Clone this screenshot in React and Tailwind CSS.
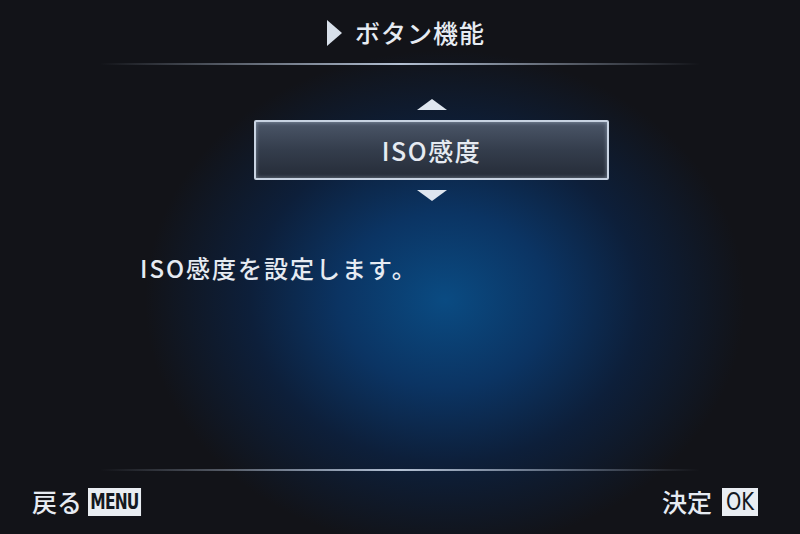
const jp = "font-['Noto_Sans_CJK_JP','Noto_Sans',sans-serif]";

function Arrow({ down }) {
  return (
    <svg width="30" height="11" viewBox="0 0 30 11" className="block">
      {down ? (
        <polygon points="0,0 30,0 15,11" fill="#dfe6ef" />
      ) : (
        <polygon points="15,0 30,11 0,11" fill="#dfe6ef" />
      )}
    </svg>
  );
}

function Divider() {
  return (
    <div className="mx-[100px] h-[2px] bg-gradient-to-r from-transparent via-[#b3c0d3] to-transparent" />
  );
}

export default function App() {
  return (
    <div
      className={`w-[800px] h-[534px] flex flex-col overflow-hidden text-[#e6ebf2] ${jp} bg-[radial-gradient(ellipse_300px_250px_at_445px_300px,#0a4b82_0%,#0b3463_35%,#0d1f3a_65%,#121318_100%)]`}
    >
      {/* title */}
      <div className="h-[63px] flex items-center justify-center gap-[13px] pl-[12px] pt-[16px] pb-[14px]">
        <svg width="15" height="26" viewBox="0 0 15 26">
          <polygon points="0,0 15,13 0,26" fill="#d8e0ea" />
        </svg>
        <span className="text-[25px] leading-none font-medium tracking-[1px]">ボタン機能</span>
      </div>
      <Divider />

      {/* selector */}
      <div className="ml-[254px] w-[355px] flex flex-col items-center mt-[34px]">
        <Arrow />
        <div className="mt-[10px] w-[355px] h-[60px] border-2 border-[#c8d3e2] rounded-[2px] flex items-center justify-center bg-gradient-to-b from-[#4b5668] via-[#343d4c] to-[#252c38] shadow-[inset_0_0_4px_rgba(200,215,235,0.5)]">
          <span className="text-[25px] leading-none font-medium tracking-[1.5px]">ISO感度</span>
        </div>
        <div className="mt-[10px]">
          <Arrow down />
        </div>
      </div>

      {/* description */}
      <p className="mt-[55px] ml-[140px] text-[24px] leading-none font-medium tracking-[2px]">ISO感度を設定します。</p>

      <div className="flex-1" />
      <Divider />

      {/* footer */}
      <div className="h-[63px] flex items-center justify-between pl-[32px] pr-[40px] pb-[2px]">
        <div className="flex items-center gap-[6px]">
          <span className="text-[25px] leading-none font-medium">戻る</span>
          <span className="bg-[#e9edf2] text-[#141820] h-[28px] px-[3px] flex items-center text-[22px] font-bold leading-none font-['DejaVu_Sans_Condensed',sans-serif] tracking-[-1px] scale-x-[0.78] origin-left">
            MENU
          </span>
        </div>
        <div className="flex items-center gap-[8px]">
          <span className="text-[25px] leading-none font-medium">決定</span>
          <span className="bg-[#e9edf2] text-[#141820] h-[28px] w-[40px] flex items-center justify-center text-[24px] leading-none font-['DejaVu_Sans_Condensed',sans-serif] scale-x-[0.9]">
            OK
          </span>
        </div>
      </div>
    </div>
  );
}
